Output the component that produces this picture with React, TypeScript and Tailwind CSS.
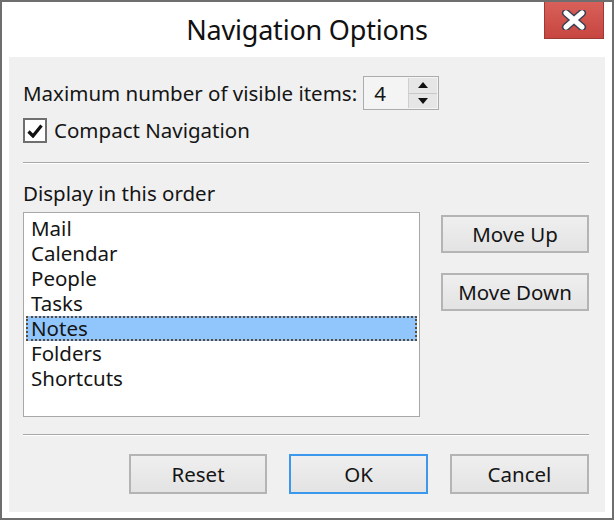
import React, { useState } from "react";

const items = ["Mail", "Calendar", "People", "Tasks", "Notes", "Folders", "Shortcuts"];

const font = { fontFamily: '"Noto Sans", "Open Sans", sans-serif' };

const DlgButton: React.FC<{ label: string; primary?: boolean; className?: string }> = ({
  label,
  primary,
  className,
}) => (
  <button
    className={
      "flex items-center justify-center bg-gradient-to-b from-[#efefef] to-[#e3e3e3] text-[20.5px] leading-[24px] text-[#151515] " +
      (primary ? "border-2 border-[#3c98ec] " : "border-2 border-[#b4b4b4] ") +
      (className ?? "")
    }
  >
    {label}
  </button>
);

const App: React.FC = () => {
  const [selected, setSelected] = useState("Notes");
  const [checked, setChecked] = useState(true);

  return (
    <div className="w-[616px] h-[522px] bg-white" style={font}>
      <div className="w-[614px] h-[520px] border-2 border-[#6e6e6e] bg-white flex flex-col">
        {/* title bar */}
        <div className="grid grid-cols-[1fr_auto_1fr] h-[55px]">
          <div />
          <div className="pt-[8px] text-[27px] leading-[40px] text-[#111] tracking-[-0.2px]">Navigation Options</div>
          <div className="flex justify-end pr-[8px]">
            <button className="w-[60px] h-[37px] bg-gradient-to-b from-[#d9605a] to-[#c74540] border border-[#9c3a36] border-t-0 flex items-center justify-center">
              <svg width="26" height="20" viewBox="0 0 26 20">
                <path
                  d="M5 3 L21 17 M21 3 L5 17"
                  stroke="#3a3f52"
                  strokeWidth="8"
                  strokeLinecap="round"
                  fill="none"
                />
                <path
                  d="M5 3 L21 17 M21 3 L5 17"
                  stroke="#ffffff"
                  strokeWidth="5"
                  strokeLinecap="round"
                  fill="none"
                />
              </svg>
            </button>
          </div>
        </div>

        {/* client area */}
        <div className="flex-1 mx-[7px] mb-[6px] bg-[#f0f0f0] pl-[14px] pr-[16px] pt-[19px] text-[20.5px] leading-[25px] text-[#151515] flex flex-col">
          <div className="flex items-center h-[34px]">
            <span>Maximum number of visible items:</span>
            <div className="ml-[6px] w-[76px] h-[34px] border border-[#acacac] bg-[#f4f4f4] flex items-center">
              <span className="flex-1 pl-[10px]">4</span>
              <div className="w-[29px] h-[30px] mr-[1px] flex flex-col border-l border-[#cfcfcf]">
                <div className="flex-1 bg-[#e6e6e6] border-b border-[#c8c8c8] flex items-center justify-center">
                  <svg width="10" height="6" viewBox="0 0 10 6">
                    <path d="M0 6 L5 0 L10 6 Z" fill="#111" />
                  </svg>
                </div>
                <div className="flex-1 bg-[#e6e6e6] flex items-center justify-center">
                  <svg width="10" height="6" viewBox="0 0 10 6">
                    <path d="M0 0 L5 6 L10 0 Z" fill="#111" />
                  </svg>
                </div>
              </div>
            </div>
          </div>

          <div className="flex items-center mt-[8px] h-[25px] cursor-default" onClick={() => setChecked(!checked)}>
            <div className="w-[24px] h-[25px] border-2 border-[#6f6f6f] bg-white flex items-center justify-center">
              {checked && (
                <svg width="16" height="14" viewBox="0 0 16 14">
                  <path d="M1.5 7.5 L6 12 L14.5 1.5" stroke="#111" strokeWidth="3.2" fill="none" />
                </svg>
              )}
            </div>
            <span className="ml-[7px]">Compact Navigation</span>
          </div>

          <div className="mt-[19px] h-[2px] bg-[#a8a8a8] border-b border-white" />

          <div className="mt-[17px] leading-[24px]">Display in this order</div>

          <div className="mt-[7px] flex">
            <div className="w-[398px] h-[205px] border border-[#a8a8a8] bg-white pt-[3px] px-[2px]">
              {items.map((item) => (
                <div
                  key={item}
                  onClick={() => setSelected(item)}
                  className={
                    "h-[25px] leading-[21px] flex items-center pl-[3px] cursor-default " +
                    (selected === item
                      ? "bg-[#90c6fb] border-2 border-dotted border-[#5d4a36]"
                      : "border-2 border-transparent")
                  }
                >
                  {item}
                </div>
              ))}
            </div>
            <div className="ml-[21px] pt-[3px] flex flex-col gap-[20px]">
              <DlgButton label="Move Up" className="w-[148px] h-[38px]" />
              <DlgButton label="Move Down" className="w-[148px] h-[38px]" />
            </div>
          </div>

          <div className="mt-[17px] h-[2px] bg-[#a8a8a8] border-b border-white" />

          <div className="mt-[18px] flex justify-end gap-[22px]">
            <DlgButton label="Reset" className="w-[138px] h-[40px]" />
            <DlgButton label="OK" primary className="w-[139px] h-[40px]" />
            <DlgButton label="Cancel" className="w-[139px] h-[40px]" />
          </div>
        </div>
      </div>
    </div>
  );
};

export default App;
